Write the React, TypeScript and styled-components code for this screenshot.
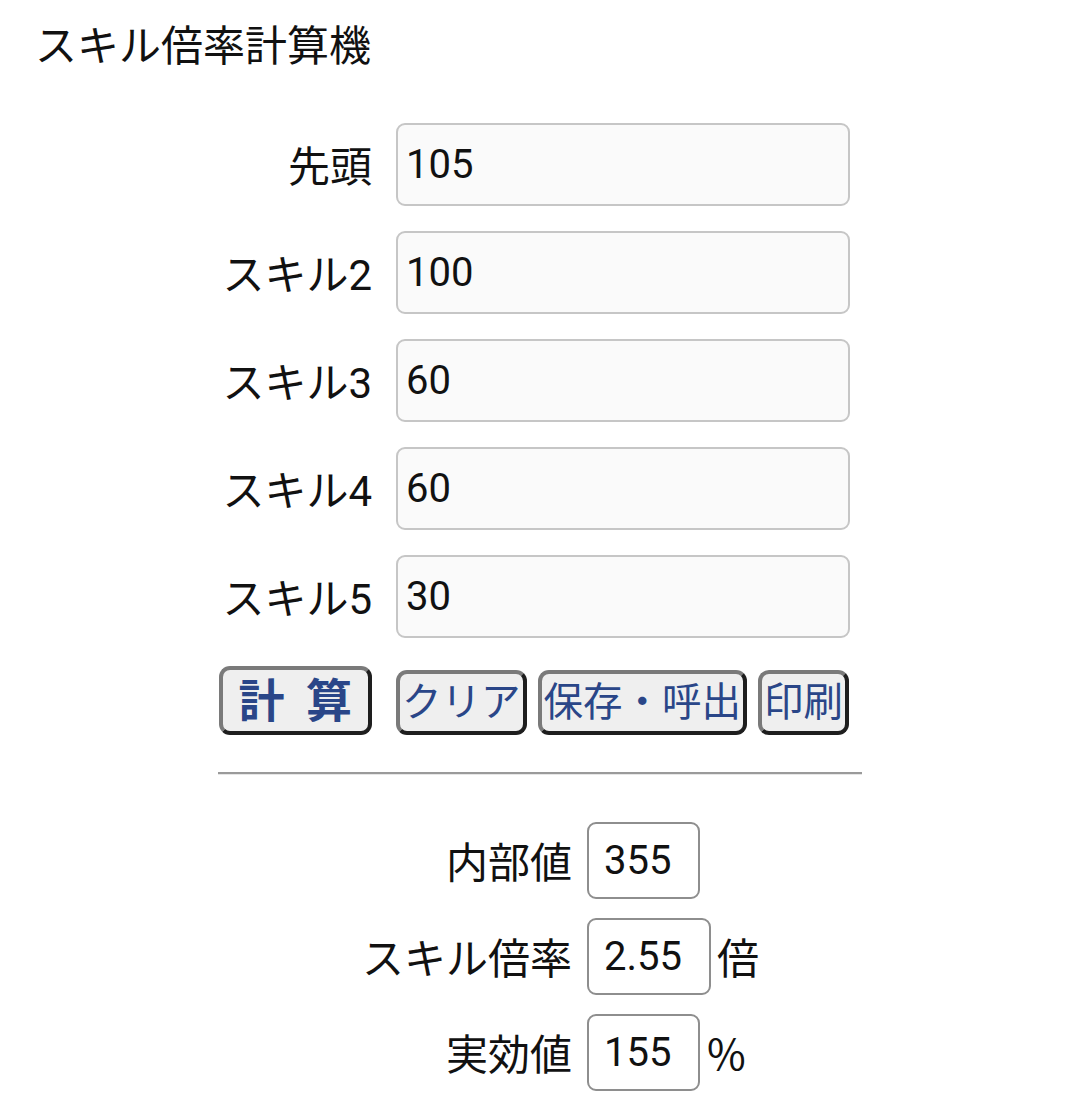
import React from "react";
import styled, { createGlobalStyle } from "styled-components";

const Global = createGlobalStyle`
  html, body { margin: 0; padding: 0; background: #fff; }
  body { font-family: Roboto, "Noto Sans CJK JP", sans-serif; color: #111; }
  * { box-sizing: border-box; }
`;

const Page = styled.div`
  width: 1080px;
  padding: 22px 0 0 0;
`;

const Title = styled.h1`
  margin: 0 0 0 35px;
  font-size: 42px;
  font-weight: 400;
  line-height: 1.2;
`;

const Form = styled.div`
  display: grid;
  grid-template-columns: 154px 454px;
  column-gap: 24px;
  row-gap: 25px;
  width: 644px;
  margin: 51px auto 0;
`;

const Label = styled.div`
  display: flex;
  align-items: center;
  justify-content: flex-end;
  font-size: 42px;
  white-space: nowrap;
  padding-bottom: 3px;
`;

const Input = styled.input`
  width: 454px;
  height: 83px;
  border: 2px solid #c6c6c6;
  border-radius: 9px;
  background: #fafafa;
  padding: 0 8px;
  font-family: Roboto, "Noto Sans CJK JP", sans-serif;
  font-size: 40px;
  color: #111;
  outline: none;
`;

const ButtonCell = styled.div`
  display: flex;
  align-items: flex-end;
  justify-content: flex-end;
  height: 69px;
  margin-top: 3px;
`;

const ButtonGroup = styled.div`
  display: flex;
  align-items: flex-end;
  gap: 11px;
  height: 69px;
  margin-top: 3px;
`;

const Button = styled.button<{ $main?: boolean }>`
  display: flex;
  align-items: center;
  justify-content: center;
  height: ${(p) => (p.$main ? 69 : 65)}px;
  padding: 0 ${(p) => (p.$main ? 16 : 2)}px;
  border: 4px solid;
  border-color: #7a7a7a #1e1e1e #1e1e1e #7a7a7a;
  border-radius: 11px;
  background: #efefef;
  color: #2a4688;
  font-family: Roboto, "Noto Sans CJK JP", sans-serif;
  font-size: ${(p) => (p.$main ? 46 : 39.5)}px;
  font-weight: ${(p) => (p.$main ? 700 : 400)};
  word-spacing: ${(p) => (p.$main ? 10 : 0)}px;
  line-height: 1;
  white-space: nowrap;
  cursor: pointer;
`;

const Rule = styled.hr`
  width: 644px;
  margin: 37px auto 0;
  height: 0;
  border: 0;
  border-top: 2px solid #9a9a9a;
  border-bottom: 1px solid #e6e6e6;
`;

const Results = styled.div`
  display: grid;
  grid-template-columns: 210px auto auto;
  grid-auto-rows: 77px;
  column-gap: 15px;
  row-gap: 19px;
  margin: 47px 0 0 362px;
  width: max-content;
`;

const ResultLabel = styled.div`
  display: flex;
  align-items: center;
  justify-content: flex-end;
  font-size: 42px;
  white-space: nowrap;
  padding-bottom: 3px;
`;

const ValueBox = styled.div`
  justify-self: start;
  display: flex;
  align-items: center;
  height: 77px;
  padding: 0 27px 0 15px;
  border: 2px solid #8e8e8e;
  border-radius: 9px;
  font-size: 40px;
`;

const Unit = styled.div<{ $shift: number }>`
  display: flex;
  align-items: center;
  font-family: "Noto Sans CJK JP", sans-serif;
  font-size: 42px;
  padding-bottom: 3px;
  margin-left: ${(p) => p.$shift}px;
`;

const fields = [
  { label: "先頭", value: "105" },
  { label: "スキル2", value: "100" },
  { label: "スキル3", value: "60" },
  { label: "スキル4", value: "60" },
  { label: "スキル5", value: "30" },
];

const results = [
  { label: "内部値", value: "355", unit: "", shift: 0 },
  { label: "スキル倍率", value: "2.55", unit: "倍", shift: -9 },
  { label: "実効値", value: "155", unit: "%", shift: -19 },
];

export default function App() {
  return (
    <Page>
      <Global />
      <Title>スキル倍率計算機</Title>
      <Form>
        {fields.map((f) => (
          <React.Fragment key={f.label}>
            <Label>{f.label}</Label>
            <Input defaultValue={f.value} />
          </React.Fragment>
        ))}
        <ButtonCell>
          <Button $main>計 算</Button>
        </ButtonCell>
        <ButtonGroup>
          <Button>クリア</Button>
          <Button>保存・呼出</Button>
          <Button>印刷</Button>
        </ButtonGroup>
      </Form>
      <Rule />
      <Results>
        {results.map((r) => (
          <React.Fragment key={r.label}>
            <ResultLabel>{r.label}</ResultLabel>
            <ValueBox>{r.value}</ValueBox>
            <Unit $shift={r.shift}>{r.unit}</Unit>
          </React.Fragment>
        ))}
      </Results>
    </Page>
  );
}
